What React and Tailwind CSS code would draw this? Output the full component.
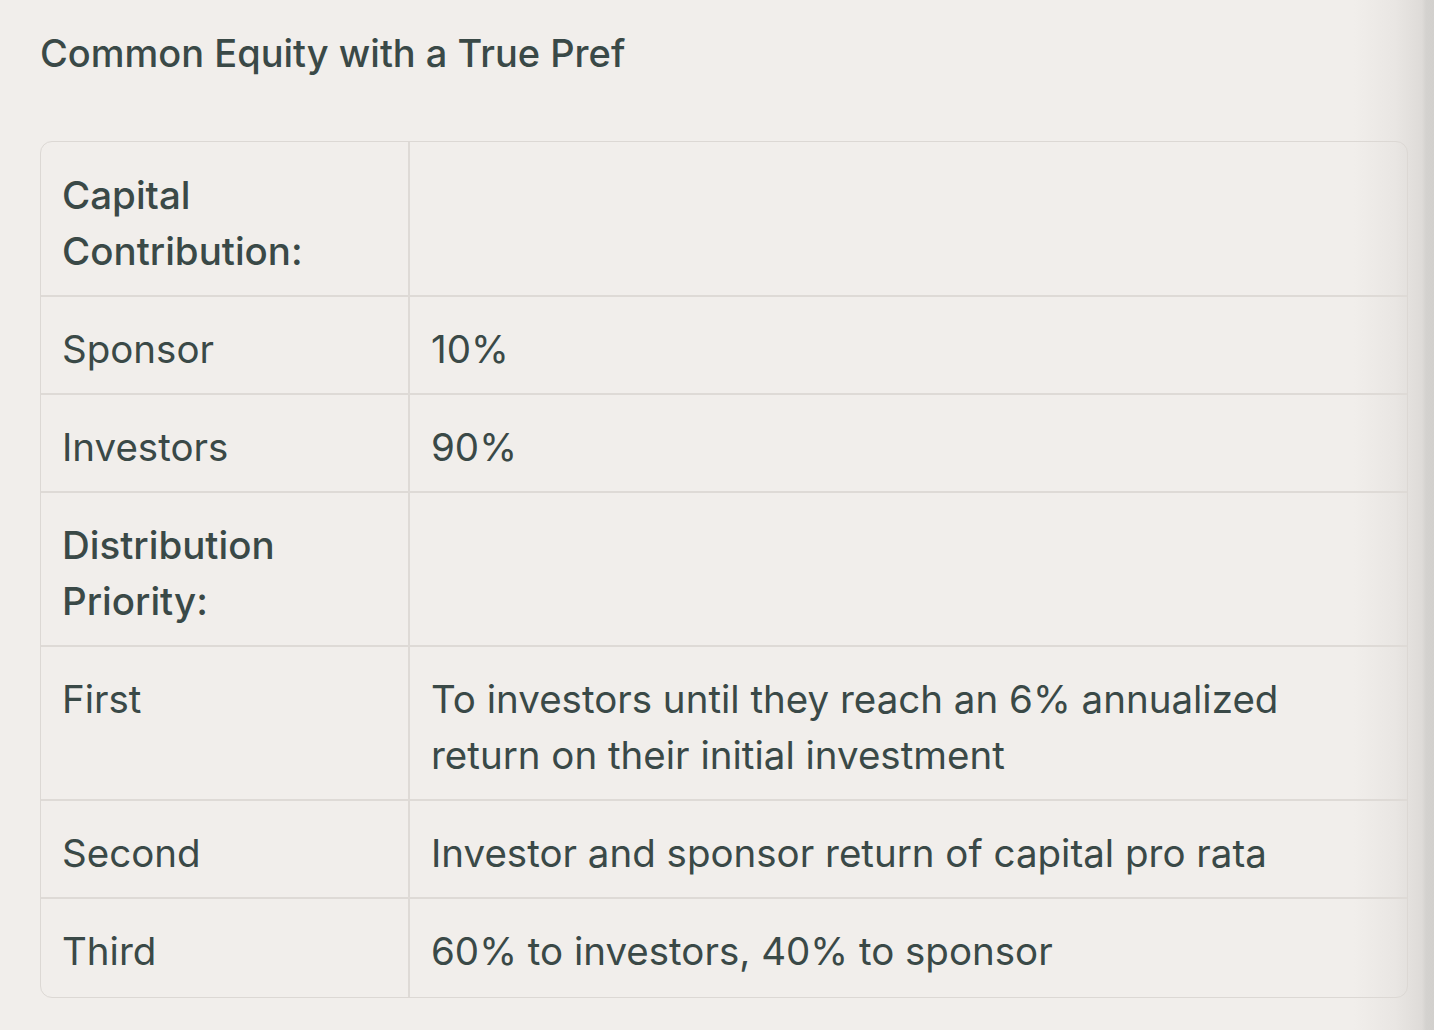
import React from 'react';

const rows = [
  { label: 'Capital Contribution:', value: '', heading: true },
  { label: 'Sponsor', value: '10%' },
  { label: 'Investors', value: '90%' },
  { label: 'Distribution Priority:', value: '', heading: true },
  { label: 'First', value: 'To investors until they reach an 6% annualized return on their initial investment' },
  { label: 'Second', value: 'Investor and sponsor return of capital pro rata' },
  { label: 'Third', value: '60% to investors, 40% to sponsor' },
];

const App = () => {
  return (
    <div className="min-h-screen bg-[linear-gradient(to_right,#f1eeeb_0px,#f1eeeb_1354px,#e9e6e3_1395px,#dedbd8_1422px,#d4d2cf_1426px,#d2d0cd_1434px)] font-['Inter',sans-serif] text-[#3a4947]">
      <div className="pl-10 pr-[26px] pt-[27px] pb-8">
        <h2 className="text-[38px] leading-[52px] font-medium">Common Equity with a True Pref</h2>

        <div className="mt-[62px] w-[1368px] border border-[#dcd8d4] rounded-xl overflow-hidden">
          <table className="w-full border-collapse text-[38.5px] leading-[56px]">
            <tbody>
              {rows.map((row, i) => {
                const pad = i === 0 ? 'pt-[25px] pb-[16px]' : i === rows.length - 1 ? 'pt-[24px] pb-[18px]' : 'pt-[24px] pb-[16px]';
                return (
                  <tr key={i} className={i > 0 ? 'border-t-2 border-[#dedad6]' : ''}>
                    <td className={`w-[368px] align-top pl-[21px] pr-5 ${pad} border-r-2 border-[#dedad6] ${row.heading ? 'font-medium' : 'font-normal'}`}>
                      {row.label}
                    </td>
                    <td className={`align-top pl-[21px] pr-[120px] ${pad}`}>{row.value}</td>
                  </tr>
                );
              })}
            </tbody>
          </table>
        </div>
      </div>
    </div>
  );
};

export default App;
